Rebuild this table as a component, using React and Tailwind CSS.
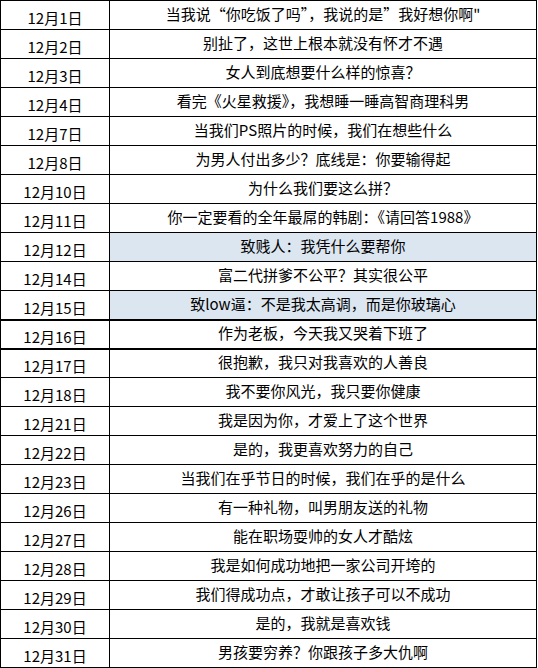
import React from "react";

const rows = [
  { date: "12月1日", title: "当我说“你吃饭了吗”，我说的是”我好想你啊\"" },
  { date: "12月2日", title: "别扯了，这世上根本就没有怀才不遇" },
  { date: "12月3日", title: "女人到底想要什么样的惊喜？" },
  { date: "12月4日", title: "看完《火星救援》，我想睡一睡高智商理科男" },
  { date: "12月7日", title: "当我们PS照片的时候，我们在想些什么" },
  { date: "12月8日", title: "为男人付出多少？底线是：你要输得起" },
  { date: "12月10日", title: "为什么我们要这么拼？" },
  { date: "12月11日", title: "你一定要看的全年最屌的韩剧：《请回答1988》" },
  { date: "12月12日", title: "致贱人：我凭什么要帮你", hl: true },
  { date: "12月14日", title: "富二代拼爹不公平？其实很公平" },
  { date: "12月15日", title: "致low逼：不是我太高调，而是你玻璃心", hl: true },
  { date: "12月16日", title: "作为老板，今天我又哭着下班了", thick: true },
  { date: "12月17日", title: "很抱歉，我只对我喜欢的人善良" },
  { date: "12月18日", title: "我不要你风光，我只要你健康" },
  { date: "12月21日", title: "我是因为你，才爱上了这个世界" },
  { date: "12月22日", title: "是的，我更喜欢努力的自己" },
  { date: "12月23日", title: "当我们在乎节日的时候，我们在乎的是什么" },
  { date: "12月26日", title: "有一种礼物，叫男朋友送的礼物" },
  { date: "12月27日", title: "能在职场耍帅的女人才酷炫" },
  { date: "12月28日", title: "我是如何成功地把一家公司开垮的" },
  { date: "12月29日", title: "我们得成功点，才敢让孩子可以不成功" },
  { date: "12月30日", title: "是的，我就是喜欢钱" },
  { date: "12月31日", title: "男孩要穷养？你跟孩子多大仇啊" },
];

export default function App() {
  return (
    <div
      className="w-[538px] h-[668px] bg-white text-black overflow-hidden"
      style={{ fontFamily: '"Noto Sans CJK SC", "Liberation Sans", sans-serif' }}
    >
      <table className="w-[537px] border-collapse table-fixed">
        <colgroup>
          <col className="w-[109px]" />
          <col />
        </colgroup>
        <tbody>
          {rows.map((r) => (
            <tr
              key={r.date}
              className={`h-[29px] ${r.thick ? "border-y-2 border-black" : ""}`}
            >
              <td className="border border-black text-center align-bottom pb-[1px] text-[15px] leading-[20px] p-0">
                {r.date}
              </td>
              <td
                className={`border border-black text-center align-middle text-[15px] leading-[20px] p-0 pb-[2px] whitespace-nowrap ${
                  r.hl ? "bg-[#dce6f1]" : ""
                }`}
              >
                {r.title}
              </td>
            </tr>
          ))}
        </tbody>
      </table>
    </div>
  );
}
